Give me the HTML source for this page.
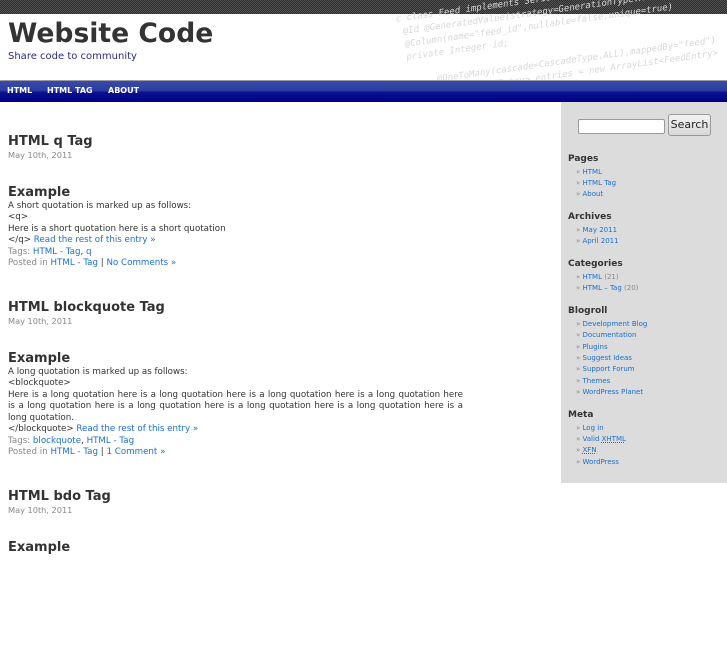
<!DOCTYPE html>
<html><head><meta charset="utf-8"><style>
*{margin:0;padding:0;box-sizing:border-box}
body{width:727px;height:545px;overflow:hidden;background:#fff;font-family:"DejaVu Sans","Liberation Sans",sans-serif;color:#333;position:relative}
a{color:#1a6fd0;text-decoration:none}
.top{position:absolute;left:0;top:0;width:727px;height:14px;background:repeating-conic-gradient(#2a2a2a 0 25%,#555 0 50%) 0 0/2px 2px}
.code{position:absolute;left:395px;top:14px;font-family:"DejaVu Sans Mono",monospace;font-size:9px;color:#d8d8d8;transform:rotate(-8deg);transform-origin:0 0;line-height:13px;white-space:pre;font-style:italic}
h1{position:absolute;left:8px;top:18px;font-size:26.6px;font-weight:bold;color:#333}
.tag{position:absolute;left:8px;top:51px;font-size:10px;color:#2a2a8a}
.nav{position:absolute;left:0;top:80px;width:727px;height:22px;background:linear-gradient(#3a4aa8 0,#2a3da0 45%,#0a1090 55%,#000080 100%);border-top:1px solid #99a}
.nav span{position:absolute;top:5px;color:#fff;font-size:8px;font-weight:bold}
.side{position:absolute;left:561px;top:102px;width:166px;height:381px;background:#dcdcdc}
.side h3{font-size:9px;font-weight:bold;color:#333;margin-left:7px;margin-top:11.5px;margin-bottom:3px}
.side ul{list-style:none;margin-left:15px;font-size:7px;line-height:11.3px}
.side li:before{content:"» ";color:#888}
.side .c{color:#888}
.main{position:absolute;left:8px;top:134px;width:455px;font-size:8.7px;line-height:11.5px}
.main h2{font-size:13px;font-weight:bold;color:#333;line-height:16px}
.date{color:#888;font-size:8.2px}
.main h3{font-size:13px;font-weight:bold;color:#333;line-height:16px;margin-top:23px}
.g{color:#888}
.post{height:166px}
.j{text-align:justify;text-align-last:justify;white-space:nowrap}
</style></head><body>
<div class="top"></div>
<div class="code">c class Feed implements Serializable {
 @Id @GeneratedValue(strategy=GenerationType.AUTO)
 @Column(name="feed_id",nullable=false,unique=true)
 private Integer id;

      @OneToMany(cascade=CascadeType.ALL),mappedBy="feed")
        List&lt;FeedEntry&gt; entries = new ArrayList&lt;FeedEntry&gt;</div>
<h1>Website Code</h1>
<div class="tag">Share code to community</div>
<div class="nav"><span style="left:7px">HTML</span><span style="left:47px">HTML TAG</span><span style="left:108px">ABOUT</span></div>
<div class="side">
<div style="position:absolute;left:17px;top:17px;width:87px;height:15px;background:#fff;border:1px solid #999;border-radius:2px"></div>
<div style="position:absolute;left:107px;top:12px;width:43px;height:22px;background:linear-gradient(#f4f4f4,#d8d8d8);border:1px solid #999;border-radius:3px;font-size:11px;text-align:center;line-height:20px;color:#222">Search</div>
<div style="height:40px"></div>
<h3>Pages</h3><ul><li><a>HTML</a></li><li><a>HTML Tag</a></li><li><a>About</a></li></ul>
<h3>Archives</h3><ul><li><a>May 2011</a></li><li><a>April 2011</a></li></ul>
<h3>Categories</h3><ul><li><a>HTML</a> <span class="c">(21)</span></li><li><a>HTML – Tag</a> <span class="c">(20)</span></li></ul>
<h3>Blogroll</h3><ul><li><a>Development Blog</a></li><li><a>Documentation</a></li><li><a>Plugins</a></li><li><a>Suggest Ideas</a></li><li><a>Support Forum</a></li><li><a>Themes</a></li><li><a>WordPress Planet</a></li></ul>
<h3>Meta</h3><ul><li><a>Log in</a></li><li><a>Valid <u style="text-decoration:underline dotted">XHTML</u></a></li><li><a><u style="text-decoration:underline dotted">XFN</u></a></li><li><a>WordPress</a></li></ul>
</div>
<div class="main">
<div class="post">
<h2>HTML q Tag</h2><div class="date">May 10th, 2011</div>
<h3>Example</h3>
<div>A short quotation is marked up as follows:<br>&lt;q&gt;<br>Here is a short quotation here is a short quotation<br>&lt;/q&gt; <a>Read the rest of this entry »</a><br><span class="g">Tags: </span><a>HTML - Tag</a>, <a>q</a><br><span class="g">Posted in </span><a>HTML - Tag</a> | <a>No Comments »</a></div>
</div>
<div class="post" style="height:189px">
<h2>HTML blockquote Tag</h2><div class="date">May 10th, 2011</div>
<h3>Example</h3>
<div>A long quotation is marked up as follows:<br>&lt;blockquote&gt;
<div class="j">Here is a long quotation here is a long quotation here is a long quotation here is a long quotation here</div>
<div class="j">is a long quotation here is a long quotation here is a long quotation here is a long quotation here is a</div>
long quotation.<br>&lt;/blockquote&gt; <a>Read the rest of this entry »</a><br><span class="g">Tags: </span><a>blockquote</a>, <a>HTML - Tag</a><br><span class="g">Posted in </span><a>HTML - Tag</a> | <a>1 Comment »</a></div>
</div>
<div class="post">
<h2>HTML bdo Tag</h2><div class="date">May 10th, 2011</div>
<h3>Example</h3>
</div>
</div>
</body></html>
